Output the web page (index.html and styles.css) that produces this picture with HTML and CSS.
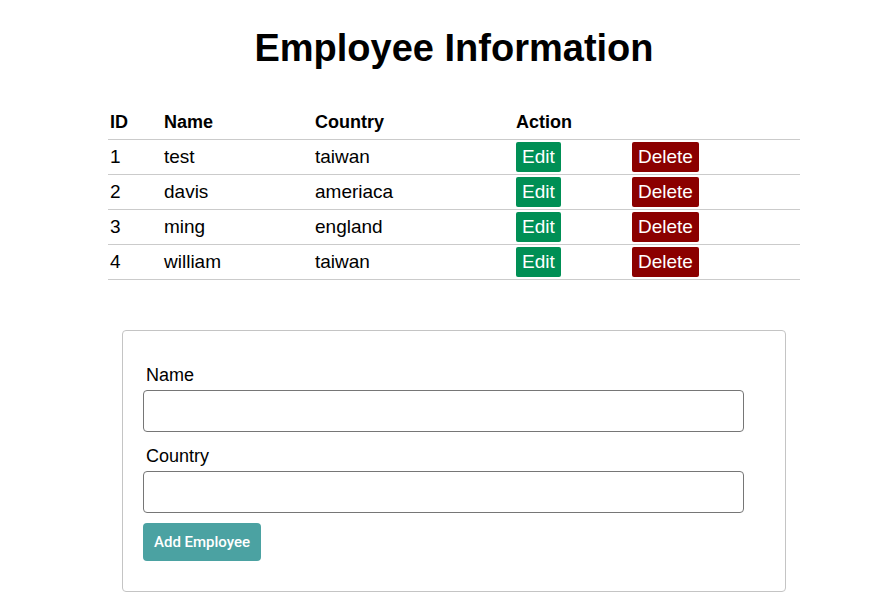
FILE: index.html
```html
<!DOCTYPE html>
<html>
<head>
<meta charset="utf-8">
<link rel="stylesheet" href="styles.css">
</head>
<body>
<div class="page">
  <h1 class="title">Employee Information</h1>
  <table class="emp-table">
    <thead>
      <tr><th class="c-id">ID</th><th class="c-name">Name</th><th class="c-country">Country</th><th class="c-action">Action</th><th class="c-del"></th></tr>
    </thead>
    <tbody>
      <tr><td>1</td><td>test</td><td>taiwan</td><td><button class="btn btn-edit">Edit</button></td><td><button class="btn btn-del">Delete</button></td></tr>
      <tr><td>2</td><td>davis</td><td>ameriaca</td><td><button class="btn btn-edit">Edit</button></td><td><button class="btn btn-del">Delete</button></td></tr>
      <tr><td>3</td><td>ming</td><td>england</td><td><button class="btn btn-edit">Edit</button></td><td><button class="btn btn-del">Delete</button></td></tr>
      <tr><td>4</td><td>william</td><td>taiwan</td><td><button class="btn btn-edit">Edit</button></td><td><button class="btn btn-del">Delete</button></td></tr>
    </tbody>
  </table>
  <form class="card">
    <label class="field-label">Name</label>
    <input class="field-input" type="text">
    <label class="field-label">Country</label>
    <input class="field-input" type="text">
    <button type="button" class="btn-add">Add Employee</button>
  </form>
</div>
</body>
</html>
```
FILE: styles.css
```css
html, body {
  margin: 0;
  padding: 0;
  background: #fff;
  color: #000;
  font-family: "Liberation Sans", Arial, sans-serif;
}
.page {
  padding-left: 32px;
  display: flex;
  flex-direction: column;
  align-items: center;
}
.title {
  margin: 24px 0 0;
  font-size: 38px;
  font-weight: bold;
  line-height: 48px;
}
.emp-table {
  margin-top: 33px;
  width: 692px;
  border-collapse: collapse;
  font-size: 19px;
}
.emp-table th {
  text-align: left;
  font-weight: bold;
  font-size: 18px;
  height: 34px;
  padding: 0 2px;
  border-bottom: 1px solid #cbcbcb;
}
.emp-table td {
  height: 34px;
  padding: 0 2px;
  border-bottom: 1px solid #cbcbcb;
}
.c-id { width: 50px; }
.c-name { width: 147px; }
.c-country { width: 197px; }
.c-action { width: 112px; }
.btn {
  font-family: "Liberation Sans", Arial, sans-serif;
  font-size: 19px;
  color: #fff;
  border: none;
  border-radius: 2px;
  height: 30px;
  padding: 0 6px;
  vertical-align: middle;
}
.btn-edit { background: #008f55; }
.btn-del { background: #8b0000; }
.card {
  margin-top: 50px;
  width: 664px;
  box-sizing: border-box;
  border: 1px solid #c4c4c4;
  border-radius: 4px;
  padding: 33px 20px 30px;
  display: flex;
  flex-direction: column;
  align-items: flex-start;
}
.field-label {
  font-size: 18px;
  line-height: 22px;
  padding-left: 3px;
  margin-bottom: 4px;
}
.field-input {
  width: 601px;
  height: 42px;
  box-sizing: border-box;
  border: 1px solid #767676;
  border-radius: 4px;
  margin-bottom: 13px;
}
.btn-add {
  margin-top: -3px;
  height: 38px;
  padding: 0 11px;
  border: none;
  border-radius: 4px;
  background: #4ba2a2;
  color: #fff;
  font-family: Roboto, "Liberation Sans", sans-serif;
  font-weight: 500;
  font-size: 15px;
}
```
